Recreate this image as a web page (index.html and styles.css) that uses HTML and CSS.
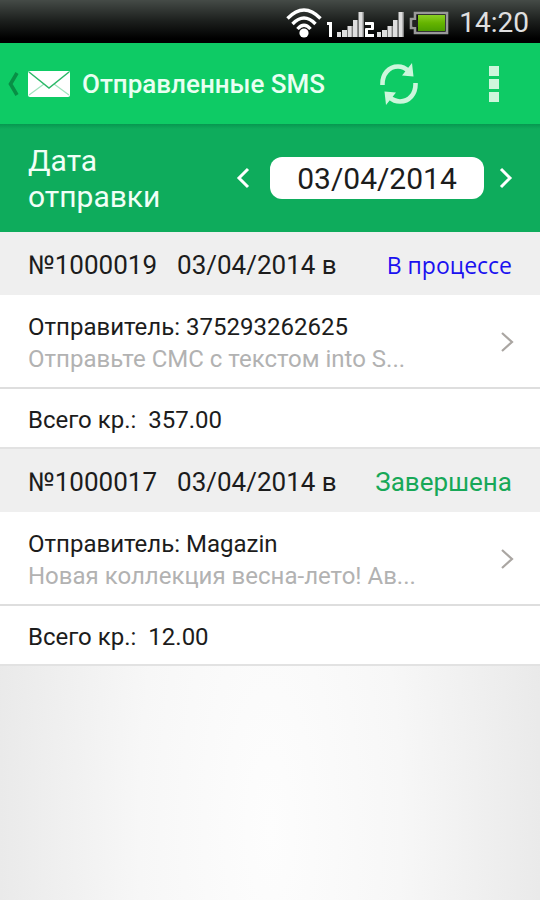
FILE: index.html
```html
<!DOCTYPE html>
<html lang="ru">
<head>
<meta charset="utf-8">
<meta name="viewport" content="width=device-width, initial-scale=1">
<title>Отправленные SMS</title>
<link rel="stylesheet" href="styles.css">
</head>
<body>
<div class="status">
  <svg class="wifi" width="36" height="32" viewBox="0 0 36 32" fill="none" stroke="#fff" stroke-width="3.400">
    <path d="M1.500 11.500Q18 -5.500 34.500 11.500M6.500 17Q18 5 29.500 17M11.500 22Q18 14.500 24.500 22"/>
    <circle cx="18" cy="26" r="4.600" fill="#fff" stroke="none"/>
  </svg>
  <svg class="signal" width="78" height="26" viewBox="0 0 78 26">
    <g fill="#fff">
      <path d="M0 10h5v15H2V13H0z"/>
      <path d="M38 10h8q1 0 1 1v6q0 1-1 1h-5v4h6v3h-9v-8q0-1 1-1h5v-3h-6z"/>
    </g>
    <g fill="#dedede">
      <path d="M10 20h4v5h-4zM15 18h5v7h-5zM20.500 14h5v11h-5zM26 8h5v17h-5zM31.500 0h5v25h-5z"/>
      <path d="M50 20h4v5h-4zM55 18h5v7h-5zM60.500 14h5v11h-5zM66 8h5v17h-5zM71.500 0h5v25h-5z"/>
    </g>
    <path d="M30.500 8v17M36 0v25M70.500 8v17M76 0v25M25 14v11M65 14v11" stroke="#8c8c8c"/>
  </svg>
  <svg class="battery" width="40" height="24" viewBox="0 0 40 24">
    <defs>
      <linearGradient id="charge" x2="0" y2="1"><stop offset="0" stop-color="#8bcf24"/><stop offset=".5" stop-color="#65b400"/><stop offset="1" stop-color="#4c9e00"/></linearGradient>
    </defs>
    <path d="M6 2h32v20H6v-5H2V8h4z" fill="#111" stroke="#999" stroke-width="2.600"/>
    <path d="M9 4h27v16H9z" fill="url(#charge)"/>
    <path d="M4 9h5v7H4z" fill="#222"/>
  </svg>
  <time class="clock">14:20</time>
</div>

<header class="bar">
  <a class="home" href="#" aria-label="Назад">
    <svg width="12" height="26" viewBox="0 0 12 26"><path d="M10 2L3.500 13L10 24" fill="none" stroke="#088f45" stroke-width="3.600"/></svg>
    <svg width="42" height="28" viewBox="0 0 42 28">
      <rect x="0" y="1" width="42" height="26" rx="2" fill="#fff"/>
      <path d="M1 25l15-11M41 25L26 14" stroke="#9fe3bd" stroke-width="1.200"/>
      <path d="M1 2l20 16L41 2" fill="none" stroke="#2cb868" stroke-width="1.500"/>
    </svg>
  </a>
  <h1 class="title">Отправленные SMS</h1>
  <button class="icon refresh" type="button" aria-label="Обновить">
    <svg width="38" height="42" viewBox="0 0 38 42">
      <g fill="none" stroke="#cdf6dc" stroke-width="4.600">
        <path d="M2.500 22C2 11 9 3.500 18 3.500c4.500 0 7.500 1.500 10.500 4.500"/>
        <path d="M35.500 20C36 31 29 38.500 20 38.500c-4.500 0-7.500-1.500-10.500-4.500"/>
      </g>
      <path d="M32 0l1.500 13.500L22 12.500zM6 42L4.500 28.500L16 29.500z" fill="#cdf6dc"/>
    </svg>
  </button>
  <button class="icon more" type="button" aria-label="Меню">
    <svg width="10" height="36" viewBox="0 0 10 36" fill="#cdf6dc"><path d="M0 0h10v10H0zM0 13h10v10H0zM0 26h10v10H0z"/></svg>
  </button>
</header>

<section class="filter">
  <label class="filter-label" for="date">Дата отправки</label>
  <div class="picker">
    <button class="icon previous" type="button" aria-label="Предыдущий день">
      <svg width="14" height="22" viewBox="0 0 14 22"><path d="M12 2L3 11l9 9" fill="none" stroke="#fff" stroke-width="3"/></svg>
    </button>
    <input class="date" id="date" type="text" value="03/04/2014">
    <button class="icon" type="button" aria-label="Следующий день">
      <svg width="14" height="22" viewBox="0 0 14 22"><path d="M2 2l9 9-9 9" fill="none" stroke="#fff" stroke-width="3"/></svg>
    </button>
  </div>
</section>

<main>
  <article class="item">
    <h2 class="item-head"><span class="number">№1000019</span><span class="when">03/04/2014 в</span><span class="state pending">В процессе</span></h2>
    <a class="message" href="#">
      <span class="lines"><span class="sender">Отправитель: 375293262625</span><span class="preview">Отправьте СМС с текстом into S...</span></span>
      <svg width="14" height="24" viewBox="0 0 14 24"><path d="M2 2l10 9-10 9" fill="none" stroke="#aaa6a2" stroke-width="2.200"/></svg>
    </a>
    <p class="total"><span>Всего кр.:</span><span>357.00</span></p>
  </article>
  <article class="item">
    <h2 class="item-head"><span class="number">№1000017</span><span class="when">03/04/2014 в</span><span class="state done">Завершена</span></h2>
    <a class="message" href="#">
      <span class="lines"><span class="sender">Отправитель: Magazin</span><span class="preview">Новая коллекция весна-лето! Ав...</span></span>
      <svg width="14" height="24" viewBox="0 0 14 24"><path d="M2 2l10 9-10 9" fill="none" stroke="#aaa6a2" stroke-width="2.200"/></svg>
    </a>
    <p class="total"><span>Всего кр.:</span><span>12.00</span></p>
  </article>
</main>
</body>
</html>
```
FILE: styles.css
```css
* { box-sizing: border-box; }

body {
  margin: 0;
  min-height: 100vh;
  display: flex;
  flex-direction: column;
  font-family: Roboto, "Liberation Sans", sans-serif;
  color: #1c1c1c;
  background: radial-gradient(ellipse 54% 100% at 50% 92%, #fdfdfd, #f7f7f7 45%, #e8e8e8);
}

svg { display: block; flex: none; }
h1, h2, p { margin: 0; font-weight: 400; }
a { color: inherit; text-decoration: none; }

.status {
  display: flex;
  align-items: center;
  justify-content: flex-end;
  height: 43px;
  padding: 3px 11px 0 0;
  background: linear-gradient(#454b47, #1b1e1c 50%, #000 90%);
}
.signal { margin: 4px 4px 0 5px; }
.clock {
  margin-left: 10px;
  font-size: 28px;
  line-height: 32px;
  color: #e0e0e0;
}

.bar {
  display: flex;
  align-items: center;
  height: 81px;
  padding: 0 41px 0 7px;
  background: #0ecb65;
}
.home { display: flex; align-items: center; gap: 9px; }
.title {
  flex: 1;
  margin-left: 12px;
  font-size: 26px;
  font-weight: 500;
  line-height: 32px;
  white-space: nowrap;
  color: #e9fff2;
}
.icon {
  display: flex;
  align-items: center;
  justify-content: center;
  padding: 0;
  border: 0;
  background: none;
}
.refresh { margin-right: 71px; }

.filter {
  display: flex;
  justify-content: space-between;
  align-items: center;
  height: 108px;
  padding: 0 27px 0 28px;
  background: linear-gradient(#079750, #0eac5c 5px);
}
.filter-label {
  width: 150px;
  padding-top: 2px;
  font-size: 30px;
  line-height: 36px;
  color: #f0fff6;
}
.picker { display: flex; align-items: center; gap: 15px; }
.previous { margin-right: 5px; }
.date {
  width: 214px;
  height: 42px;
  padding: 0;
  border: 0;
  border-radius: 12px;
  background: #fff;
  font: 30px Roboto, "Liberation Sans", sans-serif;
  text-align: center;
  color: #1c1c1c;
}

.item { background: #fff; font-size: 24px; line-height: 32px; }
.item-head {
  display: flex;
  align-items: center;
  height: 63px;
  padding: 2px 28px 0;
  background: #efefef;
  font-size: 26px;
}
.when { margin-left: 20px; }
.state { margin-left: auto; }
.pending { font-family: "Open Sans", "Noto Sans", sans-serif; font-size: 23px; color: #1a10f0; }
.done { color: #17a858; }

.message {
  display: flex;
  align-items: center;
  justify-content: space-between;
  padding: 16px 26px 12px 28px;
}
.lines { display: grid; }
.preview { color: #b2b2b2; }
.total {
  display: flex;
  gap: 12px;
  padding: 15px 28px 11px;
  border-top: 2px solid #dedede;
  border-bottom: 2px solid #e2e2e2;
}
```
